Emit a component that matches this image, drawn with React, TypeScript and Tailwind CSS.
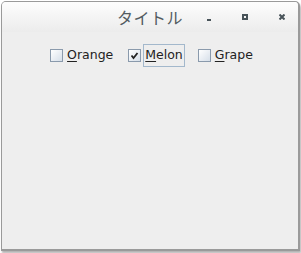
import * as React from "react"

const items = [
  { label: "Orange", key: "O", rest: "range", checked: false, focused: false },
  { label: "Melon", key: "M", rest: "elon", checked: true, focused: true },
  { label: "Grape", key: "G", rest: "rape", checked: false, focused: false },
]

function Box({ checked }: { checked: boolean }) {
  return (
    <div className="w-[13px] h-[13px] border border-[#8a9aac] bg-gradient-to-br from-[#ffffff] to-[#d6dfe9] flex items-center justify-center">
      {checked && (
        <svg width="9" height="9" viewBox="0 0 9 9">
          <path d="M1.5 4.5 L3.5 7 L7.5 2" stroke="#222" strokeWidth="1.8" fill="none" />
        </svg>
      )}
    </div>
  )
}

export default function App() {
  return (
    <div className="w-[301px] h-[253px] bg-white" style={{ fontFamily: '"DejaVu Sans", "Noto Sans CJK JP", sans-serif' }}>
      <div className="w-[299px] h-[250px] ml-px mt-px rounded-t-[5px] border border-[#9a9a9a] border-b-2 border-r-2 shadow-[1px_2px_2px_rgba(0,0,0,0.3)] flex flex-col overflow-hidden bg-[#eeeeee]">
        <div className="h-[30px] bg-gradient-to-b from-[#fdfdfd] to-[#ececec] grid grid-cols-[1fr_auto_1fr] items-center">
          <div />
          <span className="text-[16px] text-[#535c62] tracking-[0.5px] pb-[1px]" style={{ fontFamily: '"Noto Sans CJK JP", sans-serif' }}>タイトル</span>
          <div className="flex justify-end items-center gap-[31px] pr-[13px]">
            <div className="w-[4px] h-[2px] bg-[#485359] mt-[5px]" />
            <div className="w-[6px] h-[6px] border-2 border-[#485359]" />
            <svg width="6" height="6" viewBox="0 0 6 6">
              <path d="M0.5 0.5 L5.5 5.5 M5.5 0.5 L0.5 5.5" stroke="#485359" strokeWidth="2" />
            </svg>
          </div>
        </div>
        <div className="flex justify-center items-center gap-[13px] pt-[12px] pl-[5px] text-[12.5px] text-[#222]">
          {items.map((it) => (
            <div key={it.label} className="flex items-center gap-[2px]">
              <Box checked={it.checked} />
              <span className={`px-[1px] py-[1px] border ${it.focused ? "border-[#a3b8cc]" : "border-transparent"}`}>
                <span className="underline underline-offset-2">{it.key}</span>
                {it.rest}
              </span>
            </div>
          ))}
        </div>
      </div>
    </div>
  )
}
